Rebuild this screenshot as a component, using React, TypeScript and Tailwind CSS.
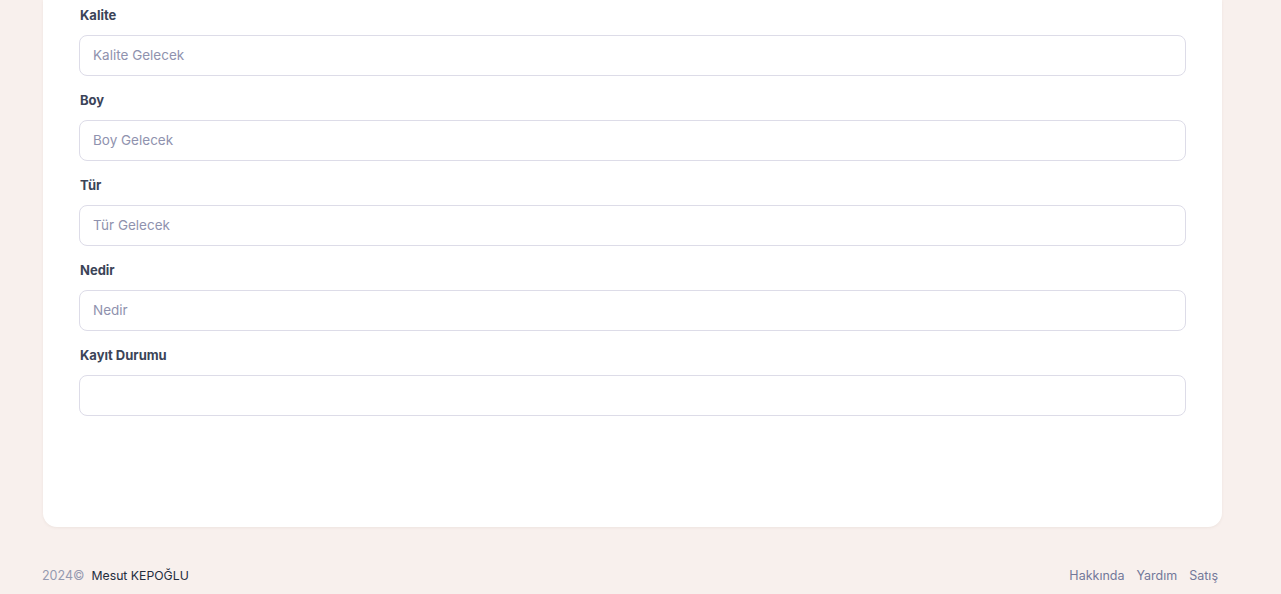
const fields = [
  { label: 'Kalite', placeholder: 'Kalite Gelecek' },
  { label: 'Boy', placeholder: 'Boy Gelecek' },
  { label: 'Tür', placeholder: 'Tür Gelecek' },
  { label: 'Nedir', placeholder: 'Nedir' },
  { label: 'Kayıt Durumu', placeholder: '' },
];

export default function App() {
  return (
    <div
      className="min-h-screen bg-[#f8f0ed] text-[#3a4256]"
      style={{ fontFamily: 'Inter, "Noto Sans", sans-serif' }}
    >
      <div className="px-[43px] pr-[59px]">
        <div className="bg-white rounded-b-[14px] shadow-[0_1px_3px_rgba(120,90,80,0.08)] px-[36px] pt-[5px] pb-[111px]">
          {fields.map((f, i) => (
            <div key={f.label} className={i > 0 ? 'mt-[14px]' : ''}>
              <label className="block pl-[1px] text-[13px] leading-[20px] font-bold text-[#3b4458]">
                {f.label}
              </label>
              <input
                placeholder={f.placeholder}
                className="mt-[10px] block w-full h-[41px] rounded-[8px] border border-[#dddce8] bg-white px-[13px] pb-[1px] text-[13.5px] text-[#3a4256] placeholder:text-[#8f92ae] outline-none"
              />
            </div>
          ))}
        </div>
      </div>
      <footer className="flex items-center justify-between pl-[42px] pr-[63px] pt-[40px] pb-[10px] text-[12.5px]">
        <div className="flex items-center gap-[7px]">
          <span className="text-[#959ab0]">2024©</span>
          <span className="text-[#232c3d] text-[12.25px]">Mesut KEPOĞLU</span>
        </div>
        <div className="flex items-center gap-[12px] text-[#73789a]">
          <a>Hakkında</a>
          <a>Yardım</a>
          <a>Satış</a>
        </div>
      </footer>
    </div>
  );
}
